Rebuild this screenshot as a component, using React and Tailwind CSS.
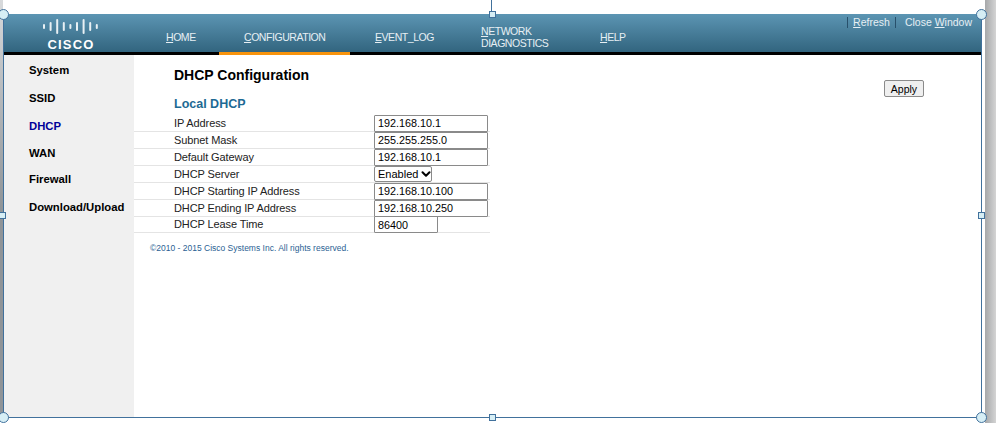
import React from 'react';
import { ChevronDown } from 'lucide-react';

const navItems = [
  { key: 'H', rest: 'OME', width: 'w-[78px]' },
  { key: 'C', rest: 'ONFIGURATION', width: 'w-[131px]' },
  { key: 'E', rest: 'VENT_LOG', width: 'w-[106px]' },
  { key: 'N', rest: 'ETWORK', extra: 'DIAGNOSTICS', width: 'w-[119px]' },
  { key: 'H', rest: 'ELP', width: 'w-[60px]' },
];

const sideItems = [
  { label: 'System', height: 'h-[28px]' },
  { label: 'SSID', height: 'h-[28px]' },
  { label: 'DHCP', height: 'h-[28px]', active: true },
  { label: 'WAN', height: 'h-[26px]' },
  { label: 'Firewall', height: 'h-[26px]' },
  { label: 'Download/Upload', height: 'h-[30px]' },
];

const rows = [
  { label: 'IP Address', value: '192.168.10.1' },
  { label: 'Subnet Mask', value: '255.255.255.0' },
  { label: 'Default Gateway', value: '192.168.10.1' },
  { label: 'DHCP Server', select: true },
  { label: 'DHCP Starting IP Address', value: '192.168.10.100' },
  { label: 'DHCP Ending IP Address', value: '192.168.10.250' },
  { label: 'DHCP Lease Time', value: '86400', short: true },
];

const logoBars = [5, 9, 15, 9, 5, 9, 15, 9, 5];

const CiscoLogo = () => (
  <div className="flex w-[56px] flex-col items-center">
    <svg width="56" height="17" viewBox="0 0 56 17">
      {logoBars.map((h, i) => (
        <rect key={i} x={i * 6.6} y={8.5 - h / 2} width="2" height={h} rx="1" fill="#e8f0f4" />
      ))}
    </svg>
    <span className="mt-[3px] text-[13px] leading-[13px] font-bold tracking-[1.2px] text-white">CISCO</span>
  </div>
);

const Handle = ({ className, round }) => (
  <span
    className={`absolute z-10 border border-[#41719c] bg-[#d6eef5] ${
      round ? 'h-[11px] w-[11px] rounded-full' : 'h-[7px] w-[7px]'
    } ${className}`}
  />
);

const Row = ({ row, last }) => (
  <div className={`flex items-center border-b border-[#e4e4e4] pl-[40px] ${last ? 'h-[16px]' : 'h-[17px]'}`}>
    <span className="w-[200px] text-[11px] tracking-[-0.1px] text-[#222]">{row.label}</span>
    {row.select ? (
      <div className="relative h-[16px] w-[58px]">
        <select
          defaultValue="Enabled"
          className="block h-[16px] w-[58px] appearance-none rounded-[2px] border border-[#8a8a8a] bg-white pl-[3px] text-[11px] leading-[14px] text-black"
        >
          <option>Enabled</option>
          <option>Disabled</option>
        </select>
        <ChevronDown className="absolute top-[1px] right-[-1px] h-[14px] w-[14px] text-black" strokeWidth={3.5} />
      </div>
    ) : (
      <input
        readOnly
        value={row.value}
        className={`h-[17px] rounded-[1px] border border-[#8a8a8a] px-[3px] text-[10.8px] text-black ${
          row.short ? 'w-[64px]' : 'w-[114px]'
        }`}
      />
    )}
  </div>
);

export default function App() {
  return (
    <div className="relative flex h-[423px] w-[996px] overflow-hidden bg-white font-['Liberation_Sans',sans-serif]">
      <div className="mb-[5px] w-[3px] bg-gradient-to-b from-[#d8dadc] via-[#8f9498] to-[#8f9498]" />

      <div className="flex min-w-0 flex-1 flex-col pt-[14px] pb-[5px]">
        <div className="flex min-h-0 flex-1 flex-col border-r border-b border-l border-[#41719c]">
          <header className="relative flex h-[41px] shrink-0 border-b-[3px] border-black bg-gradient-to-b from-[#5c95b3] to-[#32657f]">
            <div className="flex w-[162px] shrink-0 pt-[4px] pl-[39px]">
              <CiscoLogo />
            </div>
            <nav className="flex">
              {navItems.map((item) => (
                <div
                  key={item.key + item.rest}
                  className={`flex h-[38px] flex-col justify-center pt-[8px] text-[10.5px] leading-[12px] tracking-[-0.45px] text-[#e6eff4] ${item.width}`}
                >
                  <span>
                    <span className="underline">{item.key}</span>
                    {item.rest}
                  </span>
                  {item.extra && <span>{item.extra}</span>}
                  {item.rest === 'ONFIGURATION' && (
                    <span className="absolute bottom-[-3px] ml-[-25px] h-[3px] w-[131px] bg-[#f7930d]" />
                  )}
                </div>
              ))}
            </nav>
            <div className="absolute top-[2px] right-[9px] flex items-center text-[10.5px] leading-[12px] text-[#e6eff4]">
              <span className="mr-[5px] h-[11px] w-[1px] bg-[#28506b]" />
              <span>
                <span className="underline">R</span>efresh
              </span>
              <span className="mx-[5px] h-[11px] w-[1px] bg-[#28506b]" />
              <span className="ml-[4px]">
                Close <span className="underline">W</span>indow
              </span>
            </div>
          </header>

          <div className="flex min-h-0 flex-1">
            <aside className="w-[130px] shrink-0 bg-[#f0f0f0] pt-[1px] pl-[25px]">
              {sideItems.map((item) => (
                <div
                  key={item.label}
                  className={`flex items-center text-[11.3px] font-bold ${item.height} ${
                    item.active ? 'text-[#000099]' : 'text-black'
                  }`}
                >
                  {item.label}
                </div>
              ))}
            </aside>

            <main className="relative min-w-0 flex-1">
              <h1 className="mt-[12px] pl-[40px] text-[14px] leading-[16px] font-bold text-black">
                DHCP Configuration
              </h1>
              <h2 className="mt-[14px] pl-[40px] text-[12.5px] leading-[15px] font-bold text-[#1d6a94]">
                Local DHCP
              </h2>
              <div className="mt-[3px] w-[356px]">
                {rows.map((row, i) => (
                  <Row key={row.label} row={row} last={i === rows.length - 1} />
                ))}
              </div>
              <p className="mt-[10px] pl-[16px] text-[8.5px] leading-[10px] text-[#2b5f94]">
                ©2010 - 2015 Cisco Systems Inc. All rights reserved.
              </p>
              <button
                type="button"
                className="absolute top-[25px] right-[57px] h-[17px] w-[40px] rounded-[2px] border border-[#8a8a8a] bg-[#efefef] text-center text-[10.5px] leading-[14px] text-black"
              >
                Apply
              </button>
            </main>
          </div>
        </div>
      </div>

      <div className="w-[3px]" />
      <div className="w-[11px] bg-gradient-to-r from-[#a6a8aa] to-[#d4d4d4]" />

      <span className="absolute top-0 left-[491px] z-10 h-[11px] w-[1px] bg-[#41719c]" />
      <Handle className="top-[11px] left-[489px]" />
      <Handle round className="top-[9px] left-[-2px]" />
      <Handle round className="top-[9px] left-[976px]" />
      <Handle className="top-[212px] left-[-1px]" />
      <Handle className="top-[212px] left-[978px]" />
      <Handle round className="top-[412px] left-[-2px]" />
      <Handle className="top-[414px] left-[489px]" />
      <Handle round className="top-[412px] left-[976px]" />
    </div>
  );
}
